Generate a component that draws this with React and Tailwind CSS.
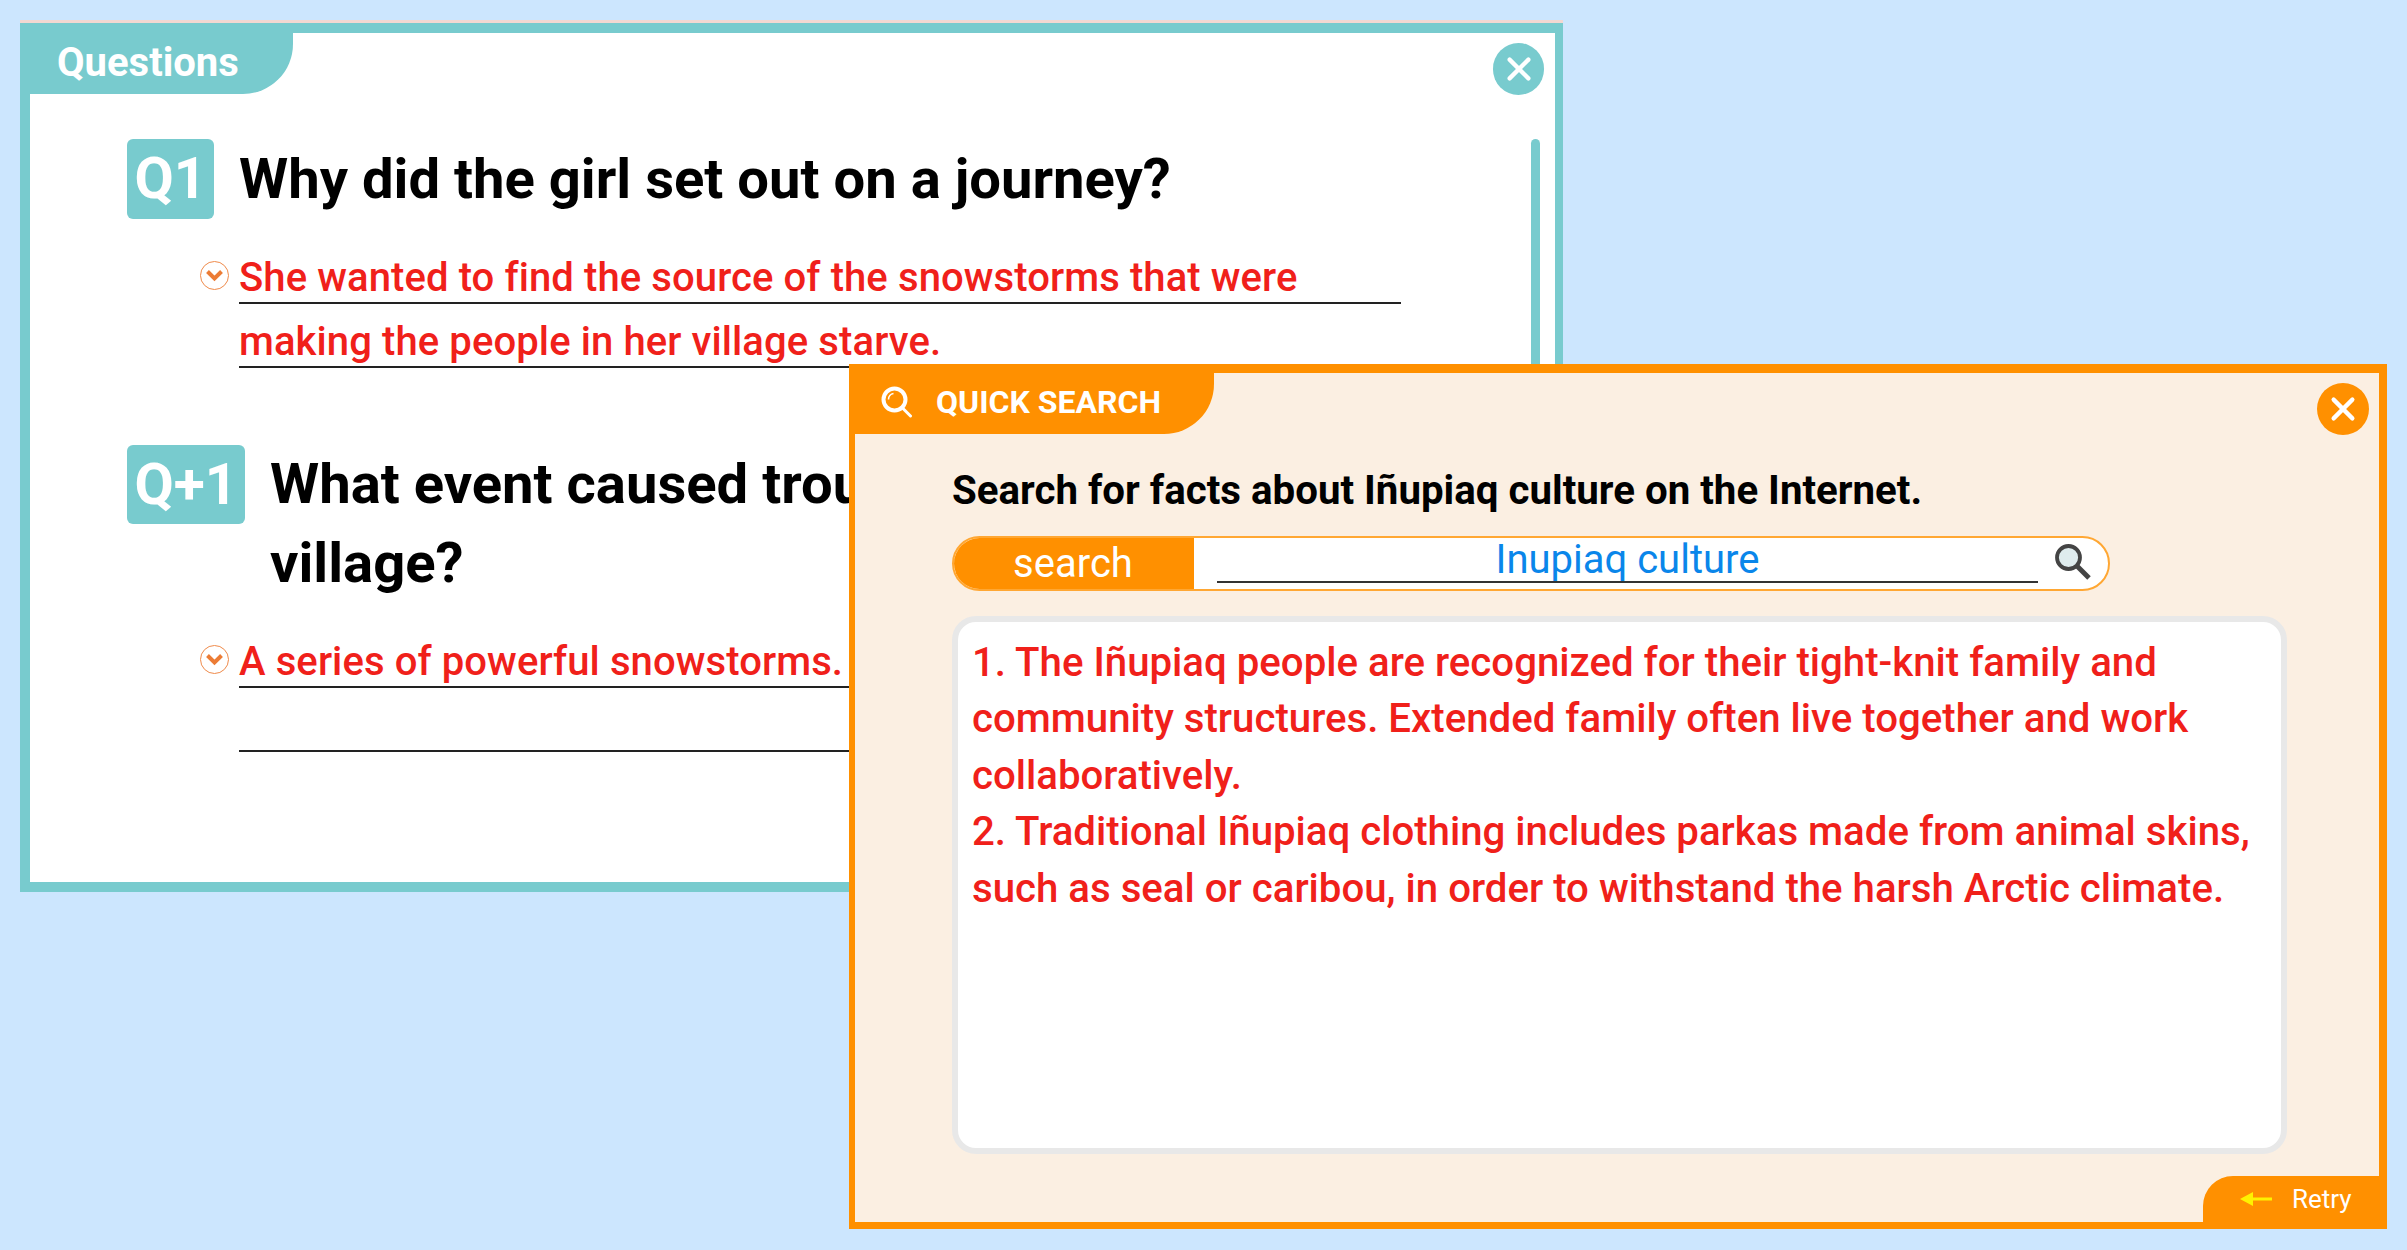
const teal = "bg-[#78cbce]";

function CloseIcon() {
  return (
    <svg viewBox="0 0 24 24" className="w-[30px] h-[30px]" fill="none" stroke="white" strokeWidth="3.4" strokeLinecap="round">
      <path d="M4.5 4.5 19.5 19.5" />
      <path d="M19.5 4.5 4.5 19.5" />
    </svg>
  );
}

function CheckIcon() {
  return (
    <svg viewBox="0 0 29 29" className="w-[29px] h-[29px] shrink-0" fill="none">
      <circle cx="14.5" cy="14.5" r="14" stroke="#ef8a4a" strokeWidth="1" />
      <path d="M7.5 10.5 14.5 17.5 21.5 10.5" stroke="#ec7c35" strokeWidth="4" />
    </svg>
  );
}

function AnswerLines({ lines }) {
  return (
    <div className="flex flex-col w-[1162px]">
      {lines.map((line, i) => (
        <div key={i} className="h-[64px] border-b-2 border-[#222] text-[40px] leading-[75px] font-medium text-[#f0201a] tracking-[0.1px] whitespace-nowrap">
          {line}
        </div>
      ))}
    </div>
  );
}

function QuestionsPanel() {
  return (
    <div className="absolute left-[20px] top-[20px] w-[1543px] h-[872px] border-t-[3px] border-[#f2d8d2]">
      <div className="relative h-full bg-white border-t-[10px] border-l-[10px] border-r-[8px] border-b-[10px] border-[#78cbce]">
        <div className={`w-[263px] h-[61px] ${teal} rounded-br-[50px] pl-[27px] text-white text-[40px] font-bold leading-[60px]`}>
          Questions
        </div>
        <button className={`absolute right-[11px] top-[10px] w-[51px] h-[52px] rounded-full ${teal} flex items-center justify-center`}>
          <CloseIcon />
        </button>
        <div className={`absolute right-[15px] top-[106px] w-[9px] h-[700px] rounded-full ${teal}`} />

        <div className="pl-[97px] pt-[45px]">
          <div className="flex gap-[25px]">
            <div className={`w-[87px] h-[80px] rounded-[6px] ${teal} flex items-center justify-center text-white text-[57px] font-bold`}>Q1</div>
            <h2 className="text-[56.2px] leading-[80px] font-bold text-black">Why did the girl set out on a journey?</h2>
          </div>
          <div className="flex gap-[10px] pl-[73px] mt-[21px]">
            <div className="pt-[21px]"><CheckIcon /></div>
            <AnswerLines lines={["She wanted to find the source of the snowstorms that were", "making the people in her village starve."]} />
          </div>

          <div className="flex gap-[25px] mt-[77px]">
            <div className={`w-[118px] h-[79px] shrink-0 rounded-[6px] ${teal} flex items-center justify-center text-white text-[57px] font-bold`}>Q+1</div>
            <h2 className="w-[1100px] text-[56.2px] leading-[79px] font-bold text-black">What event caused trouble in the girl's village?</h2>
          </div>
          <div className="flex gap-[10px] pl-[73px] mt-[21px]">
            <div className="pt-[21px]"><CheckIcon /></div>
            <AnswerLines lines={["A series of powerful snowstorms.", ""]} />
          </div>
        </div>
      </div>
    </div>
  );
}

function SearchPanel() {
  return (
    <div className="absolute left-[849px] top-[364px] w-[1538px] h-[865px] bg-[#fbefe2] border-t-[9px] border-l-[6px] border-r-[8px] border-b-[7px] border-[#ff9000]">
      <div className="w-[359px] h-[61px] bg-[#ff9000] rounded-br-[50px] flex items-center pl-[26px] gap-[23px] pb-[4px]">
        <svg viewBox="0 0 32 32" className="w-[32px] h-[32px]" fill="none" stroke="white">
          <circle cx="13.5" cy="13.5" r="11" strokeWidth="4" />
          <path d="M7.5 13.5a6 6 0 0 1 5-6" strokeWidth="1.6" />
          <path d="M21.5 22 29.5 30" strokeWidth="3" strokeLinecap="round" />
        </svg>
        <span className="text-white text-[32px] font-bold whitespace-nowrap">QUICK SEARCH</span>
      </div>
      <button className="absolute right-[10px] top-[10px] w-[52px] h-[52px] rounded-full bg-[#ff9000] flex items-center justify-center">
        <CloseIcon />
      </button>

      <div className="pl-[97px] pt-[29px]">
        <p className="text-[40.25px] leading-[56px] font-bold text-black whitespace-nowrap">
          Search for facts about Iñupiaq culture on the Internet.
        </p>
        <div className="mt-[17px] w-[1158px] h-[55px] flex items-stretch rounded-full border-2 border-[#ffa733] bg-white overflow-hidden">
          <div className="w-[242px] -my-[2px] -ml-[2px] bg-[#ff9000] flex items-center justify-center text-white text-[40px]">search</div>
          <div className="w-[821px] ml-[23px] h-[45px] border-b-2 border-[#333] text-center text-[#0a86ea] text-[40px] leading-[44px]">
            Inupiaq culture
          </div>
          <svg viewBox="0 0 38 38" className="w-[38px] h-[38px] ml-[16px] mt-[5px]" fill="none">
            <circle cx="14.5" cy="14.5" r="11.5" fill="#dfecee" stroke="#444" strokeWidth="3.8" />
            <path d="M23 23 35 35" stroke="#444" strokeWidth="5" />
          </svg>
        </div>
        <div className="mt-[25px] w-[1335px] h-[538px] rounded-[24px] border-[6px] border-[#e8e8e8] bg-white px-[14px] pt-[13px] text-[40.2px] leading-[56.4px] font-medium text-[#f0201a]">
          1. The Iñupiaq people are recognized for their tight-knit family and community structures. Extended family often live together and work collaboratively.
          <br />
          2. Traditional Iñupiaq clothing includes parkas made from animal skins, such as seal or caribou, in order to withstand the harsh Arctic climate.
        </div>
      </div>

      <div className="absolute right-0 bottom-0 w-[176px] h-[46px] bg-[#ff9000] rounded-tl-[30px] flex items-center pl-[37px] gap-[20px] text-white text-[26px]">
        <svg viewBox="0 0 32 14" className="w-[32px] h-[14px]">
          <path d="M0 7 13 0V5.6H32V8.4H13V14Z" fill="#fff200" />
        </svg>
        Retry
      </div>
    </div>
  );
}

export default function App() {
  return (
    <div className="relative w-[2407px] h-[1250px] overflow-hidden bg-[#cce6fe] font-[Roboto,sans-serif]">
      <QuestionsPanel />
      <SearchPanel />
    </div>
  );
}
